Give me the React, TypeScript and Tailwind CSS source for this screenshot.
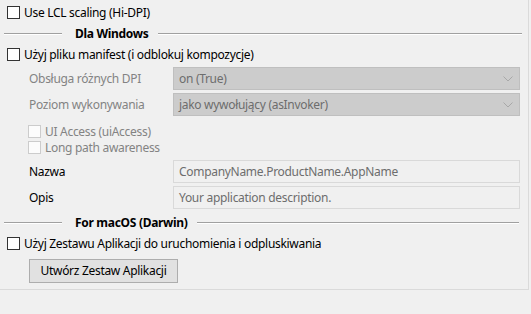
import React from "react";

const font = { fontFamily: '"Noto Sans", "Open Sans", sans-serif' };

function Check({ disabled = false, label }: { disabled?: boolean; label: string }) {
  return (
    <div className="flex h-[13px] items-center">
      <div
        className={
          disabled
            ? "h-[13px] w-[13px] shrink-0 border border-[#cccccc] bg-[#fcfcfc]"
            : "h-[13px] w-[13px] shrink-0 border border-[#333333] bg-white"
        }
      />
      <span className={disabled ? "ml-[4px] whitespace-nowrap text-[#838383]" : "ml-[4px] whitespace-nowrap text-black"}>
        {label}
      </span>
    </div>
  );
}

function Separator({ label, end }: { label: string; end: string }) {
  return (
    <div className={"flex h-[15px] items-center pl-[4px] " + end}>
      <div className="h-[2px] w-[58px] border-t border-b border-t-[#a0a0a0] border-b-white" />
      <span className="ml-[13px] mr-[9px] whitespace-nowrap font-bold text-black">{label}</span>
      <div className="h-[2px] flex-1 border-t border-b border-t-[#a0a0a0] border-b-white" />
    </div>
  );
}

function Combo({ label, value }: { label: string; value: string }) {
  return (
    <div className="flex h-[23px] items-center">
      <span className="w-[173px] shrink-0 pl-[29px] whitespace-nowrap text-[#838383]">{label}</span>
      <div className="flex h-[23px] w-[347px] items-center border border-[#bfbfbf] bg-[#cccccc] pl-[5px] pr-[6px]">
        <span className="flex-1 whitespace-nowrap text-[#6d6d6d]">{value}</span>
        <svg width="10" height="6" viewBox="0 0 10 6" className="shrink-0">
          <path d="M0.5 0.5 L5 5 L9.5 0.5" fill="none" stroke="#a8a8a8" strokeWidth="1" />
        </svg>
      </div>
    </div>
  );
}

function Edit({ label, value }: { label: string; value: string }) {
  return (
    <div className="flex h-[23px] items-center">
      <span className="w-[173px] shrink-0 pl-[29px] whitespace-nowrap text-black">{label}</span>
      <div className="flex h-[23px] w-[347px] items-center border border-[#d9d9d9] bg-[#f0f0f0] pl-[5px]">
        <span className="whitespace-nowrap text-[#6d6d6d]">{value}</span>
      </div>
    </div>
  );
}

export default function App() {
  return (
    <div className="h-[314px] w-[531px] bg-[#f0f0f0] text-[12px] leading-none tracking-[-0.3px]" style={font}>
      <div className="flex h-[290px] w-[529px] flex-col border-r border-b border-[#dadada]">
        <div className="mt-[6px] pl-[7px]">
          <Check label="Use LCL scaling (Hi-DPI)" />
        </div>
        <div className="mt-[7px]">
          <Separator label="Dla Windows" end="pr-[6px]" />
        </div>
        <div className="mt-[7px] pl-[7px]">
          <Check label="Użyj pliku manifest (i odblokuj kompozycje)" />
        </div>
        <div className="mt-[6px]">
          <Combo label="Obsługa różnych DPI" value="on (True)" />
        </div>
        <div className="mt-[3px]">
          <Combo label="Poziom wykonywania" value="jako wywołujący (asInvoker)" />
        </div>
        <div className="mt-[9px] pl-[28px]">
          <Check disabled label="UI Access (uiAccess)" />
        </div>
        <div className="mt-[3px] pl-[28px]">
          <Check disabled label="Long path awareness" />
        </div>
        <div className="mt-[6px]">
          <Edit label="Nazwa" value="CompanyName.ProductName.AppName" />
        </div>
        <div className="mt-[3px]">
          <Edit label="Opis" value="Your application description." />
        </div>
        <div className="mt-[6px]">
          <Separator label="For macOS (Darwin)" end="pr-[9px]" />
        </div>
        <div className="mt-[7px] pl-[7px]">
          <Check label="Użyj Zestawu Aplikacji do uruchomienia i odpluskiwania" />
        </div>
        <div className="mt-[9px] pl-[29px]">
          <button className="flex h-[24px] w-[149px] items-center justify-center border border-[#adadad] bg-[#e1e1e1] text-black">
            Utwórz Zestaw Aplikacji
          </button>
        </div>
      </div>
    </div>
  );
}
